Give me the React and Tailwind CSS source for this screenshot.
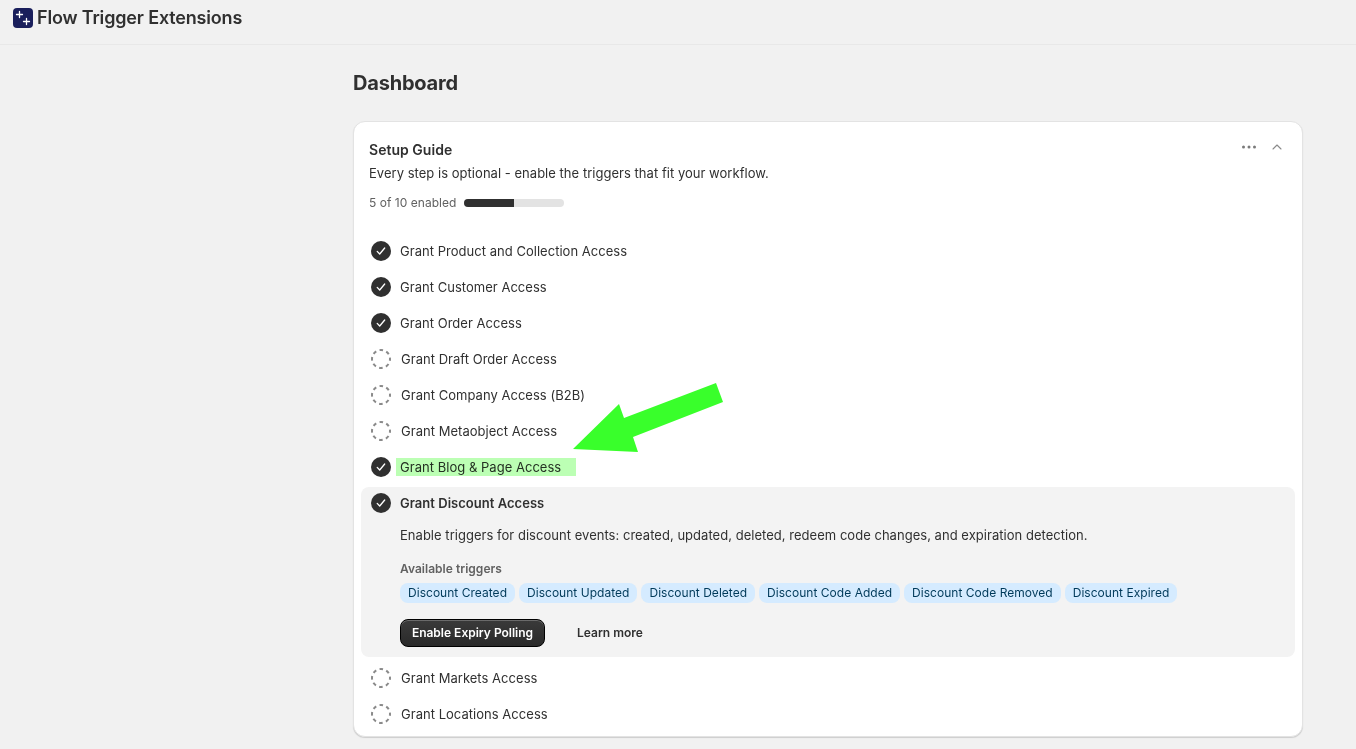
import React from "react";
import { ChevronUp } from "lucide-react";

const triggers = [
  "Discount Created",
  "Discount Updated",
  "Discount Deleted",
  "Discount Code Added",
  "Discount Code Removed",
  "Discount Expired",
];

function CheckIcon() {
  return (
    <svg width="20" height="20" viewBox="0 0 20 20" className="shrink-0">
      <circle cx="10" cy="10" r="10" fill="#303030" />
      <path d="M6.2 10.4l2.5 2.6 5-6" fill="none" stroke="#fff" strokeWidth="1.3" strokeLinecap="round" strokeLinejoin="round" />
    </svg>
  );
}

function DashedIcon() {
  return (
    <svg width="20" height="20" viewBox="0 0 20 20" className="shrink-0">
      <circle cx="10" cy="10" r="9" fill="none" stroke="#8a8a8a" strokeWidth="2" strokeDasharray="3.6 3.47" strokeDashoffset="1.8" />
    </svg>
  );
}

function Step({ label, done }) {
  return (
    <div className="flex h-9 items-center pl-[10px]">
      {done ? <CheckIcon /> : <DashedIcon />}
      <span className={done ? "ml-[9px] pt-[2px]" : "ml-[10px] pt-[2px]"}>{label}</span>
    </div>
  );
}

export default function App() {
  return (
    <div className="relative h-[749px] overflow-hidden bg-[#f1f1f1] text-[13px] tracking-[0.03px] text-[#303030]" style={{ fontFamily: "Inter, sans-serif" }}>
      <header className="flex h-[45px] items-start gap-1 border-b border-[#e8e8e8] pl-[13px] pt-[8px]">
        <div className="flex h-5 w-5 items-center justify-center rounded-[4px] bg-[#1a1f5c]">
          <svg width="20" height="20" viewBox="0 0 20 20">
            <path d="M6.5 3.5v6M3.5 6.5h6M13.5 10.5v6M10.5 13.5h6" stroke="#fff" strokeWidth="1.3" strokeLinecap="round" />
          </svg>
        </div>
        <h1 className="text-[18px] leading-5 font-semibold tracking-[-0.17px] text-[#303030]">Flow Trigger Extensions</h1>
      </header>

      <main className="ml-[353px] w-[950px]">
        <h2 className="pt-[26px] text-[20px] leading-6 font-bold tracking-[-0.2px] text-[#303030]">Dashboard</h2>

        <section className="mt-[26px] h-[616px] rounded-xl border border-[#e3e3e3] bg-white shadow-[0_1px_1px_rgba(0,0,0,0.15)]">
          <div className="relative px-[15px] pt-[18px]">
            <h3 className="text-[14px] leading-5 font-semibold">Setup Guide</h3>
            <p className="mt-[3px] leading-5">Every step is optional - enable the triggers that fit your workflow.</p>
            <div className="mt-[10px] flex items-center gap-2">
              <span className="text-[12px] leading-5 text-[#616161]">5 of 10 enabled</span>
              <div className="h-[8px] w-[100px] overflow-hidden rounded-full bg-[#e3e3e3]">
                <div className="h-full w-1/2 bg-[#303030]" />
              </div>
            </div>
            <div className="absolute right-[17px] top-[15px] flex items-center gap-[12px] text-[#8a8a8a]">
              <svg width="16" height="20" viewBox="0 0 16 20">
                <circle cx="2.5" cy="10" r="1.5" fill="#7a7a7a" />
                <circle cx="8" cy="10" r="1.5" fill="#7a7a7a" />
                <circle cx="13.5" cy="10" r="1.5" fill="#7a7a7a" />
              </svg>
              <ChevronUp size={16} strokeWidth={1.6} />
            </div>
          </div>

          <div className="mx-[7px] mt-[20px]">
            <Step label="Grant Product and Collection Access" done />
            <Step label="Grant Customer Access" done />
            <Step label="Grant Order Access" done />
            <Step label="Grant Draft Order Access" />
            <Step label="Grant Company Access (B2B)" />
            <Step label="Grant Metaobject Access" />
            <Step label="Grant Blog &amp; Page Access" done />

            <div className="mt-[2px] h-[170px] rounded-lg bg-[#f3f3f3]">
              <div className="flex h-8 items-center pl-[10px]">
                <CheckIcon />
                <span className="ml-[9px] pt-[2px] font-semibold">Grant Discount Access</span>
              </div>
              <div className="pl-[39px]">
                <p className="mt-[6px] leading-5">Enable triggers for discount events: created, updated, deleted, redeem code changes, and expiration detection.</p>
                <p className="mt-[16px] text-[12px] leading-4 font-semibold text-[#616161]">Available triggers</p>
                <div className="mt-[6px] flex gap-1">
                  {triggers.map((t) => (
                    <span key={t} className="flex h-5 items-center rounded-lg bg-[#d5ebff] px-2 text-[12px] text-[#003a5a]">{t}</span>
                  ))}
                </div>
                <div className="mt-[16px] flex items-center">
                  <button className="h-7 w-[145px] rounded-lg border border-black bg-[linear-gradient(#3a3a3a,#2a2a2a)] text-[12px] font-semibold tracking-normal text-white shadow-[inset_0_1px_0_rgba(255,255,255,0.25)]">Enable Expiry Polling</button>
                  <span className="ml-[32px] text-[12px] font-semibold tracking-normal">Learn more</span>
                </div>
              </div>
            </div>

            <div className="mt-[3px]">
              <Step label="Grant Markets Access" />
              <Step label="Grant Locations Access" />
            </div>
          </div>
        </section>
      </main>

      {/* annotation painted over the screenshot */}
      <div className="absolute left-[396px] top-[458px] h-[18px] w-[180px] bg-[#bcffb4] mix-blend-multiply" />
      <svg className="absolute left-0 top-0" width="1356" height="749">
        <polygon points="716,383 723,402 633,437 638,452 573,449 619,404 624,418" fill="#39ff2b" />
      </svg>
    </div>
  );
}
